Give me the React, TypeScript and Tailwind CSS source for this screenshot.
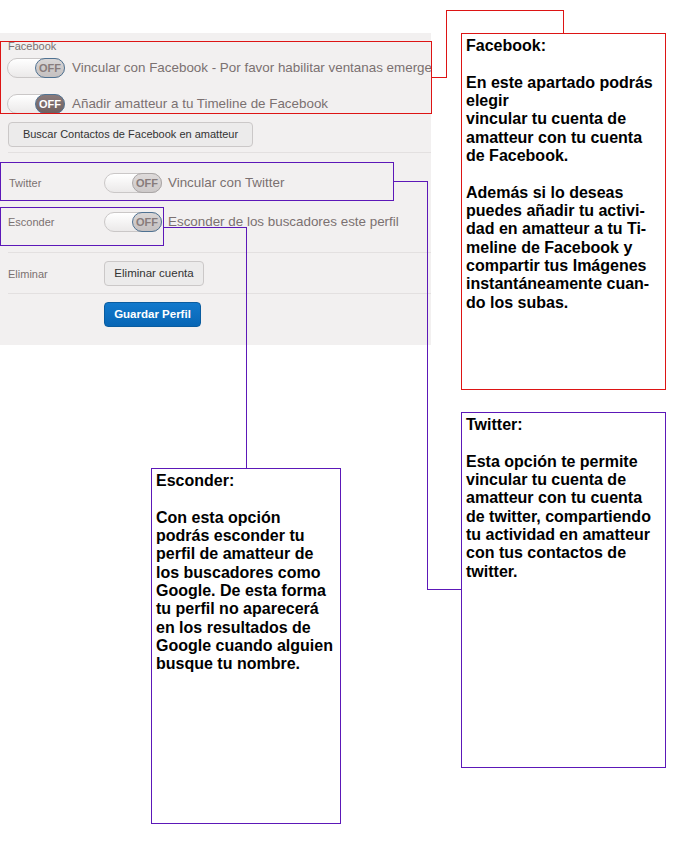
import React from "react";

type KnobVariant = "light" | "dark" | "plain";

function Toggle({ variant }: { variant: KnobVariant }) {
  const knob =
    variant === "dark"
      ? "bg-gradient-to-b from-[#8a7a7a] to-[#6f6060] text-white border-[#4f7292]"
      : variant === "light"
        ? "bg-gradient-to-b from-[#d9d6d6] to-[#c4c0c0] text-[#877c7c] border-[#4f7292]"
        : "bg-gradient-to-b from-[#dedada] to-[#cdc9c9] text-[#877c7c] border-[#aaa6a6]";

  return (
    <div className="flex h-[20px] w-[58px] shrink-0 justify-end rounded-full border border-[#cac7c7] bg-gradient-to-b from-white to-[#ebe9e9]">
      <div
        className={`-m-px flex h-[20px] w-[30px] items-center justify-center rounded-full border-[1.5px] text-[11px] font-bold leading-none ${knob}`}
      >
        OFF
      </div>
    </div>
  );
}

function Separator() {
  return <div className="ml-[8px] h-px bg-[#e3e0e0]" />;
}

const fbNote = `Facebook:

En este apartado podrás
elegir
vincular tu cuenta de
amatteur con tu cuenta
de Facebook.

Además si lo deseas
puedes añadir tu activi-
dad en amatteur a tu Ti-
meline de Facebook y
compartir tus Imágenes
instantáneamente cuan-
do los subas.`;

const twNote = `Twitter:

Esta opción te permite
vincular tu cuenta de
amatteur con tu cuenta
de twitter, compartiendo
tu actividad en amatteur
con tus contactos de
twitter.`;

const hideNote = `Esconder:

Con esta opción
podrás esconder tu
perfil de amatteur de
los buscadores como
Google. De esta forma
tu perfil no aparecerá
en los resultados de
Google cuando alguien
busque tu nombre.`;

export default function App() {
  return (
    <div className="relative h-[854px] w-[673px] overflow-hidden bg-white font-['Liberation_Sans',Arial,sans-serif]">
      {/* settings panel */}
      <div className="mt-[33px] h-[312px] w-[431px] overflow-hidden bg-[#f2f0f0] text-[#7b7171]">
        <div className="pl-[8px] pt-[7px] text-[11px] leading-[13px]">Facebook</div>

        <div className="mt-[5px] flex h-[20px] items-center gap-[7px] pl-[7px]">
          <Toggle variant="light" />
          <span className="whitespace-nowrap text-[13.4px]">
            Vincular con Facebook - Por favor habilitar ventanas emergentes
          </span>
        </div>

        <div className="mt-[16px] flex h-[20px] items-center gap-[7px] pl-[7px]">
          <Toggle variant="dark" />
          <span className="whitespace-nowrap text-[13.4px]">Añadir amatteur a tu Timeline de Facebook</span>
        </div>

        <button
          type="button"
          className="ml-[8px] mt-[8px] flex h-[25px] w-[245px] items-center justify-center rounded-[4px] border border-[#cbc8c8] bg-[#ecebeb] text-[11px] text-[#333]"
        >
          Buscar Contactos de Facebook en amatteur
        </button>

        <div className="mt-[5px]">
          <Separator />
        </div>

        <div className="mt-[20px] flex h-[20px] items-center pl-[9px]">
          <span className="w-[95px] text-[11px]">Twitter</span>
          <Toggle variant="plain" />
          <span className="ml-[6px] whitespace-nowrap text-[13.4px]">Vincular con Twitter</span>
        </div>

        <div className="mt-[19px] flex h-[20px] items-center pl-[8px]">
          <span className="w-[96px] text-[11px]">Esconder</span>
          <Toggle variant="light" />
          <span className="ml-[6px] whitespace-nowrap text-[13.4px]">Esconder de los buscadores este perfil</span>
        </div>

        <div className="mt-[20px]">
          <Separator />
        </div>

        <div className="mt-[8px] flex h-[25px] items-center pl-[8px]">
          <span className="w-[96px] pt-[2px] text-[11px]">Eliminar</span>
          <button
            type="button"
            className="flex h-[25px] w-[100px] items-center justify-center rounded-[4px] border border-[#cbc8c8] bg-[#ecebeb] text-[11.5px] text-[#333]"
          >
            Eliminar cuenta
          </button>
        </div>

        <div className="mt-[7px]">
          <Separator />
        </div>

        <div className="mt-[8px] pl-[104px]">
          <button
            type="button"
            className="flex h-[25px] w-[97px] items-center justify-center rounded-[4px] border border-[#0a5c9f] bg-gradient-to-b from-[#1279cc] to-[#0866b5] text-[11.5px] font-bold text-white"
          >
            Guardar Perfil
          </button>
        </div>
      </div>

      {/* highlight frames and connectors */}
      <svg
        className="pointer-events-none absolute left-0 top-0"
        width="673"
        height="854"
        shapeRendering="crispEdges"
        fill="none"
      >
        <rect x="0.5" y="41.5" width="431" height="72" stroke="#dd1414" />
        <polyline points="431.5,77.5 446.5,77.5 446.5,10.5 563.5,10.5 563.5,33" stroke="#dd1414" />

        <rect x="0.5" y="162.5" width="393" height="38" stroke="#5c18b8" />
        <polyline points="393.5,181.5 427.5,181.5 427.5,589.5 461,589.5" stroke="#5c18b8" />

        <rect x="0.5" y="207.5" width="163" height="38" stroke="#5c18b8" />
        <polyline points="163.5,227.5 246.5,227.5 246.5,468" stroke="#5c18b8" />
      </svg>

      {/* notes */}
      <div className="absolute left-[461px] top-[33px] h-[357px] w-[205px] whitespace-pre border border-[#dd1414] bg-white px-[4px] pt-[3px] text-[16px] font-bold leading-[18.33px] text-black">
        {fbNote}
      </div>

      <div className="absolute left-[461px] top-[412px] h-[356px] w-[205px] whitespace-pre border border-[#5c18b8] bg-white px-[4px] pt-[3px] text-[16px] font-bold leading-[18.33px] text-black">
        {twNote}
      </div>

      <div className="absolute left-[151px] top-[468px] h-[356px] w-[190px] whitespace-pre border border-[#5c18b8] bg-white px-[4px] pt-[3px] text-[16px] font-bold leading-[18.33px] text-black">
        {hideNote}
      </div>
    </div>
  );
}
